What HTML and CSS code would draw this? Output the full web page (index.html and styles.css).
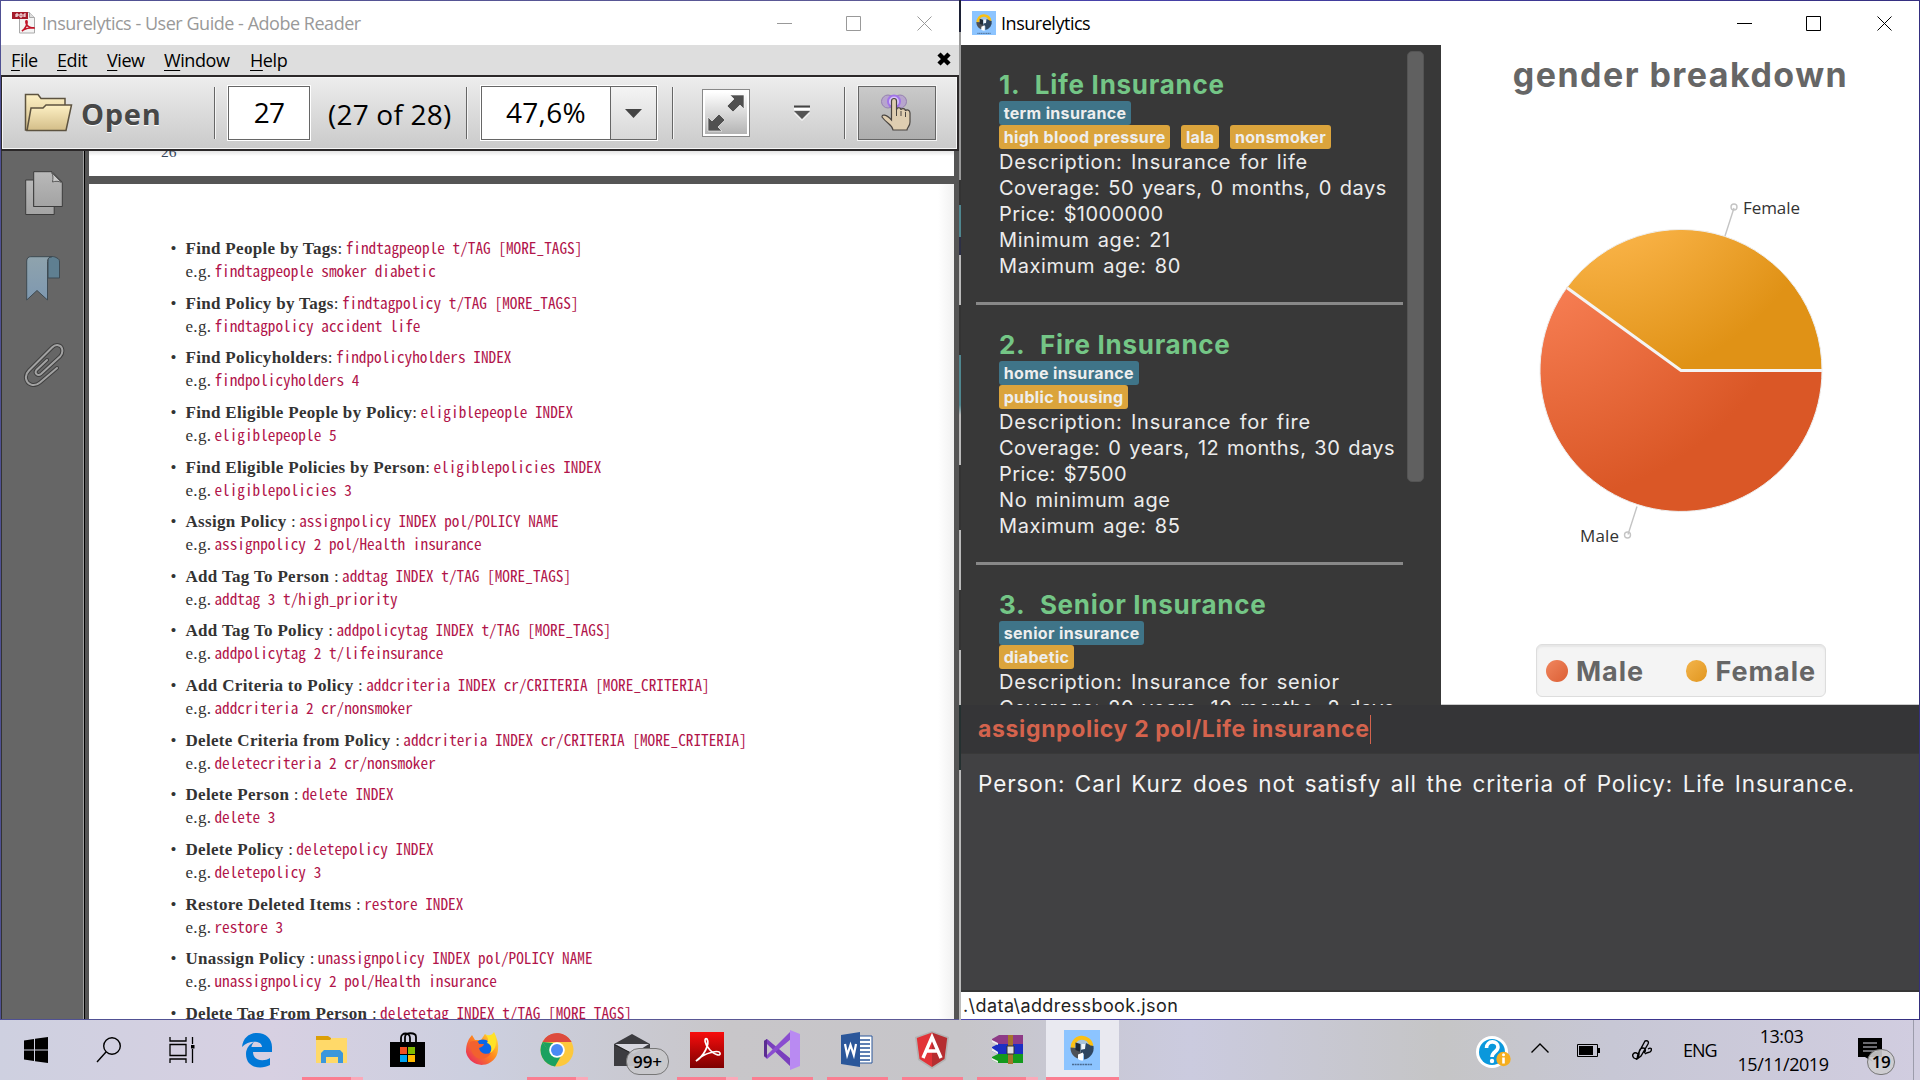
FILE: index.html
```html
<!DOCTYPE html>
<html lang="en">
<head>
<meta charset="utf-8">
<title>Insurelytics</title>
<link rel="stylesheet" href="styles.css">
</head>
<body>
<svg width="0" height="0" class="defs">
  <defs>
    <linearGradient id="folder" x1="0" y1="0" x2="0" y2="1"><stop offset="0" stop-color="#fdf0c4"/><stop offset="1" stop-color="#d3bd88"/></linearGradient>
    <linearGradient id="paper" x1="0" y1="0" x2="0" y2="1"><stop offset="0" stop-color="#b9b9b9"/><stop offset="1" stop-color="#a3a3a3"/></linearGradient>
    <linearGradient id="ribbon" x1="0" y1="0" x2="0" y2="1"><stop offset="0" stop-color="#8fa3ad"/><stop offset="1" stop-color="#7e98b0"/></linearGradient>
    <linearGradient id="full" x1="0" y1="0" x2="0" y2="1"><stop offset="0" stop-color="#fff"/><stop offset="1" stop-color="#b4b4b4"/></linearGradient>
    <linearGradient id="adobe" x1="0" y1="0" x2="0" y2="1"><stop offset="0" stop-color="#f80d0d"/><stop offset="1" stop-color="#7d0000"/></linearGradient>
    <linearGradient id="fox" x1="1" y1="0" x2="0" y2="1"><stop offset="0" stop-color="#fff044"/><stop offset=".45" stop-color="#ff8a1c"/><stop offset="1" stop-color="#e4186a"/></linearGradient>
    <symbol id="logo" viewBox="0 0 36 36">
      <rect width="36" height="36" fill="#8cc4ff"/>
      <circle cx="18" cy="17" r="8" fill="#a9c4dc"/>
      <path d="M8.800 17A9.300 9.300 0 0 1 27.300 15" fill="none" stroke="#fbc014" stroke-width="4"/>
      <path d="M29.500 15A11.700 11.700 0 0 1 20 28.500v-7L24 14z" fill="#2f4660"/>
      <path d="M6.500 16.500c0 5 2 8.500 7 11l5-4.500-6-6z" fill="#4d5157"/>
      <path d="M11.500 11.500l5 1.500v8l-5-2z" fill="#1f2a38"/>
      <path d="M22 12l4 2v6l-5 3-4-1v-3l4-1z" fill="#2f4660"/>
      <path d="M17.500 13h3.500v5h-3.500z" fill="#f1f6fb"/>
      <path d="M14 23.500l5-2v8c-2 0-3.500-.5-5-1.500z" fill="#fff"/>
      <path d="M8 33.500h20" stroke="#4a6b91" stroke-width="1.500" stroke-dasharray="2 .6"/>
    </symbol>
  </defs>
</svg>

<main class="desktop">
  <section class="window reader">
    <header class="titlebar">
      <svg class="app-icon" width="24" height="24" viewBox="0 0 24 24">
        <path d="M7.500 1.500h10l5 5v15.500h-15z" fill="#f4f4f4" stroke="#aaa"/>
        <path d="M17.500 1.500v5h5" fill="#ddd" stroke="#aaa"/>
        <path d="M0 1h16v7H0z" fill="#a51c2b"/>
        <path d="M4 6V3h2v2H4M8 3v3h2V3zM12 6V3h2M12 5h2" fill="none" stroke="#fff"/>
        <path d="M10 20c3-2 6-7 5-10-1-1-2 1 0 4s5 3 7 3-8-1-12 3z" fill="none" stroke="#c11327" stroke-width="1.600"/>
      </svg>
      <span class="title">Insurelytics - User Guide - Adobe Reader</span>
      <svg class="controls" width="156" height="15" viewBox="0 0 156 15"><path d="M0 7.500h15M69.500.5h14v14h-14zM140.500.5l14 14m0-14l-14 14" fill="none" stroke="currentColor"/></svg>
    </header>
    <nav class="menu">
      <span class="m-file"><u>F</u>ile</span><span class="m-edit"><u>E</u>dit</span><span class="m-view"><u>V</u>iew</span><span class="m-window"><u>W</u>indow</span><span><u>H</u>elp</span>
      <svg class="close-doc" width="14" height="14" viewBox="0 0 14 14"><path d="M2 2l10 10M12 2L2 12" stroke="#000" stroke-width="4.500"/></svg>
    </nav>
    <div class="toolbar">
      <div class="open">
        <svg width="49" height="40" viewBox="0 0 49 40">
          <path d="M1.500 37V1.500H14l3 4h24V37z" fill="url(#folder)" stroke="#5d5340" stroke-width="1.500"/>
          <path d="M3 37.500L7 15h12l3-3h25.500L42 37.500z" fill="url(#folder)" stroke="#5d5340" stroke-width="1.500"/>
        </svg>
        <b>Open</b>
      </div>
      <i class="sep"></i>
      <div class="page-box">27</div>
      <span class="page-count">(27 of 28)</span>
      <i class="sep"></i>
      <div class="zoom-box"><span>47,6%</span><div class="drop"><svg width="17" height="9"><path d="M0 0h17L8.500 9z" fill="#444"/></svg></div></div>
      <i class="sep"></i>
      <svg class="fullscreen" width="48" height="48" viewBox="0 0 48 48">
        <rect x=".5" y=".5" width="47" height="47" fill="#fff" stroke="#888"/>
        <rect x="3" y="3" width="42" height="42" fill="url(#full)"/>
        <path d="M28 6h14v14l-4-4-7 7-6-6 7-7zM6 28l4 4 7-7 6 6-7 7 4 4H6z" fill="#505050" stroke="#fff" stroke-width=".6"/>
      </svg>
      <svg class="more" width="18" height="18" viewBox="0 0 18 18"><path d="M1 2.500h16" stroke="#444" stroke-width="2"/><path d="M1 5h16" stroke="#fff" stroke-width="2"/><path d="M1 7h16l-8 8z" fill="#555"/><path d="M1.500 9L9 16.500 16.500 9" stroke="#fff" fill="none"/></svg>
      <i class="sep"></i>
      <div class="touch">
        <svg width="34" height="38" viewBox="0 0 34 38">
          <circle cx="8" cy="7.500" r="6.500" fill="#b7a5cd" stroke="#9681b1"/><circle cx="20" cy="7.500" r="6.500" fill="#b7a5cd" stroke="#9681b1"/>
          <circle cx="14" cy="7.500" r="7" fill="#a174e8"/><circle cx="14" cy="7.500" r="5" fill="#d8c2fb"/>
          <path d="M11.500 7a2.500 2.500 0 0 1 5 0v9c0-3 4.500-3 4.500 0 0-2 4.500-2 4.500 1 1-2 4.500-1 4.500 2v9c0 5-3 5-3 8H13c-1-6-6-6-11-13 0-3 4-3 9.500 3z" fill="#dfceb1" stroke="#4a4540" stroke-width="1.200"/>
          <path d="M16.500 16v6M21 17v5M25.500 18v5" stroke="#4a4540"/>
        </svg>
      </div>
    </div>
    <div class="reader-body">
      <aside class="side">
        <svg width="38" height="44" viewBox="0 0 38 44"><path d="M.7 9h8v26.500h20.500v8H.7z" fill="url(#paper)" stroke="#3c3c3c"/><path d="M8.700.7H27l10.300 10.500v24.300H8.700z" fill="url(#paper)" stroke="#3c3c3c"/><path d="M26.500 1.500c2 3 1.500 6 1 9.500 3-1 6-1 9 .5z" fill="#c9c9c9" stroke="#5a5a5a"/></svg>
        <svg width="35" height="45" viewBox="0 0 35 45"><path d="M22 2c2-2 6-2 9 0 2 1 2.500 2 2.500 4v16H22z" fill="#5f7f91" stroke="#3e4a52"/><path d="M.7 5c0-3 2-4.300 4-4.300H26c-3 0-4.500 2-4.500 5V44L11 34.500.7 44z" fill="url(#ribbon)" stroke="#3e4a52"/></svg>
        <svg width="42" height="45" viewBox="0 0 42 45"><g fill="none" stroke-linecap="round"><path d="M34 26L17 40.500c-6 5-13 2-14-4-.5-3 1-6 3-8L29 5.500c4-4 9-2.500 10 1s0 6-2 8L18 32c-3 2.500-7-.5-4.500-4L24 18" stroke="#3f3f3f" stroke-width="4"/><path d="M34 26L17 40.500c-6 5-13 2-14-4-.5-3 1-6 3-8L29 5.500c4-4 9-2.500 10 1s0 6-2 8L18 32c-3 2.500-7-.5-4.500-4L24 18" stroke="#a2a2a2" stroke-width="2"/></g></svg>
      </aside>
      <div class="pages">
        <div class="page previous"><span>26</span></div>
        <div class="page current">
          <ul class="commands">
            <li><b>Find People by Tags</b>: <code>findtagpeople t/TAG [MORE_TAGS]</code><br>e.g. <code>findtagpeople smoker diabetic</code></li>
            <li><b>Find Policy by Tags</b>: <code>findtagpolicy t/TAG [MORE_TAGS]</code><br>e.g. <code>findtagpolicy accident life</code></li>
            <li><b>Find Policyholders</b>: <code>findpolicyholders INDEX</code><br>e.g. <code>findpolicyholders 4</code></li>
            <li><b>Find Eligible People by Policy</b>: <code>eligiblepeople INDEX</code><br>e.g. <code>eligiblepeople 5</code></li>
            <li><b>Find Eligible Policies by Person</b>: <code>eligiblepolicies INDEX</code><br>e.g. <code>eligiblepolicies 3</code></li>
            <li><b>Assign Policy</b> : <code>assignpolicy INDEX pol/POLICY NAME</code><br>e.g. <code>assignpolicy 2 pol/Health insurance</code></li>
            <li><b>Add Tag To Person</b> : <code>addtag INDEX t/TAG [MORE_TAGS]</code><br>e.g. <code>addtag 3 t/high_priority</code></li>
            <li><b>Add Tag To Policy</b> : <code>addpolicytag INDEX t/TAG [MORE_TAGS]</code><br>e.g. <code>addpolicytag 2 t/lifeinsurance</code></li>
            <li><b>Add Criteria to Policy</b> : <code>addcriteria INDEX cr/CRITERIA [MORE_CRITERIA]</code><br>e.g. <code>addcriteria 2 cr/nonsmoker</code></li>
            <li><b>Delete Criteria from Policy</b> : <code>addcriteria INDEX cr/CRITERIA [MORE_CRITERIA]</code><br>e.g. <code>deletecriteria 2 cr/nonsmoker</code></li>
            <li><b>Delete Person</b> : <code>delete INDEX</code><br>e.g. <code>delete 3</code></li>
            <li><b>Delete Policy</b> : <code>deletepolicy INDEX</code><br>e.g. <code>deletepolicy 3</code></li>
            <li><b>Restore Deleted Items</b> : <code>restore INDEX</code><br>e.g. <code>restore 3</code></li>
            <li><b>Unassign Policy</b> : <code>unassignpolicy INDEX pol/POLICY NAME</code><br>e.g. <code>unassignpolicy 2 pol/Health insurance</code></li>
            <li><b>Delete Tag From Person</b> : <code>deletetag INDEX t/TAG [MORE_TAGS]</code></li>
          </ul>
        </div>
      </div>
    </div>
  </section>

  <section class="window insure">
    <header class="titlebar active">
      <svg class="app-icon" width="24" height="24"><use href="#logo"/></svg>
      <span class="title">Insurelytics</span>
      <svg class="controls" width="156" height="15" viewBox="0 0 156 15"><path d="M0 7.500h15M69.500.5h14v14h-14zM140.500.5l14 14m0-14l-14 14" fill="none" stroke="currentColor"/></svg>
    </header>
    <div class="content">
      <div class="list-panel">
        <div class="policies">
          <article class="policy">
            <h2><span>1.</span><span>Life Insurance</span></h2>
            <div class="tags"><span class="tag blue">term insurance</span></div>
            <div class="tags"><span class="tag">high blood pressure</span><span class="tag">lala</span><span class="tag">nonsmoker</span></div>
            <p class="description">Description: Insurance for life</p><p class="coverage">Coverage: 50 years, 0 months, 0 days</p><p class="price">Price: $1000000</p><p>Minimum age: 21</p><p>Maximum age: 80</p>
          </article>
          <article class="policy">
            <h2><span>2.</span><span>Fire Insurance</span></h2>
            <div class="tags"><span class="tag blue">home insurance</span></div>
            <div class="tags"><span class="tag">public housing</span></div>
            <p class="description">Description: Insurance for fire</p><p class="coverage">Coverage: 0 years, 12 months, 30 days</p><p class="price">Price: $7500</p><p>No minimum age</p><p>Maximum age: 85</p>
          </article>
          <article class="policy">
            <h2><span>3.</span><span>Senior Insurance</span></h2>
            <div class="tags"><span class="tag blue">senior insurance</span></div>
            <div class="tags"><span class="tag">diabetic</span></div>
            <p class="description">Description: Insurance for senior</p><p class="coverage">Coverage: 20 years, 10 months, 2 days</p>
          </article>
        </div>
        <div class="scrollbar"></div>
      </div>
      <div class="chart">
        <h1>gender breakdown</h1>
        <svg class="pie" width="478" height="360" viewBox="1441 195 478 360">
          <defs>
            <radialGradient id="gold" gradientUnits="userSpaceOnUse" cx="1590" cy="140" r="245"><stop offset=".45" stop-color="#f7b043"/><stop offset="1" stop-color="#e09216"/></radialGradient>
            <radialGradient id="orange" gradientUnits="userSpaceOnUse" cx="1520" cy="210" r="295"><stop offset=".3" stop-color="#f67d52"/><stop offset="1" stop-color="#da5726"/></radialGradient>
          </defs>
          <path d="M1681 370.500L1566.900 287.600A141 141 0 0 1 1822 370.500z" fill="url(#gold)" stroke="#eee" stroke-width="1"/>
          <path d="M1681 370.500H1822A141 141 0 1 1 1566.900 287.600z" fill="url(#orange)" stroke="#eee" stroke-width="1"/>
          <path d="M1567.300 288L1681 370.500H1822" fill="none" stroke="#f4f4f4" stroke-width="3"/>
          <g fill="none" stroke="#c4c4c4" stroke-width="1.400"><path d="M1725 236l9-28M1637 506.500l-9 28"/><circle cx="1734" cy="207" r="3"/><circle cx="1627.500" cy="535" r="3"/></g>
          <text x="1743" y="213.700" textLength="57">Female</text>
          <text x="1580" y="542" textLength="39">Male</text>
        </svg>
        <div class="legend"><i class="dot male"></i><b class="l-male">Male</b><i class="dot female"></i><b>Female</b></div>
      </div>
    </div>
    <div class="command"><span>assignpolicy 2 pol/Life insurance</span><i class="caret"></i></div>
    <div class="result">Person: Carl Kurz does not satisfy all the criteria of Policy: Life Insurance.</div>
    <footer class="status">.\data\addressbook.json</footer>
  </section>
</main>

<footer class="taskbar">
  <div class="cell sys"><svg width="24" height="26" viewBox="0 0 24 26"><path d="M0 3.500L10 2v10.500H0zM11 1.800L24 0v12.500H11zM0 13.500h10V24L0 22.500zM11 13.500h13V26l-13-1.800z"/></svg></div>
  <div class="cell sys"><svg width="26" height="26" viewBox="0 0 26 26"><g fill="none" stroke="#000" stroke-width="1.400"><circle cx="16" cy="9" r="8.300"/><path d="M10 15L1 25"/></g></svg></div>
  <div class="cell sys"><svg width="26" height="26" viewBox="0 0 26 26"><path d="M1 0v4h16V0M1 26v-4h16v4M1 7.500h16v11H1zM23.500 0v7M23.500 12v14" fill="none" stroke="#000" stroke-width="1.300"/><path d="M22 8h3.500v3.500H22z"/></svg></div>
  <div class="cell"><svg width="32" height="36" viewBox="0 0 32 36"><path d="M1 15C2 6 8 1 16 1c9 0 15 6 15 14v5H12c0 9 11 10 17 6v7c-9 5-24 3-24-11 0-6 4-10 8-12-2 2-2.500 4-2.500 5H21c0-7-14-7-20 0z" fill="#0078d7"/></svg></div>
  <div class="cell run more-win"><svg width="32" height="29" viewBox="0 0 32 29"><path d="M0 1h12l3 2v4H0z" fill="#dc9f06"/><path d="M0 5h14l2-2h15v25H0z" fill="#ffd969"/><path d="M5 28V18l3-3h16l3 3v10h-5v-6H10v6z" fill="#3b97dc"/></svg></div>
  <div class="cell"><svg width="35" height="36" viewBox="0 0 35 36"><path d="M11 10V6c0-6 9-6 9 0v4M15 10V5c0-5 11-5 11 0v5" fill="none" stroke="#000" stroke-width="1.800"/><path d="M0 10h35v25H0z"/><path d="M10 15h7v7h-7z" fill="#f25022"/><path d="M18 15h7v7h-7z" fill="#7fba00"/><path d="M10 23h7v7h-7z" fill="#00a4ef"/><path d="M18 23h7v7h-7z" fill="#ffb900"/></svg></div>
  <div class="cell"><svg width="34" height="36" viewBox="0 0 34 36"><path d="M4 7l3-4 3 5 6 0 4-6 4 4c4 0 6-2 5-6 3 6 5 12 4 18A16.200 16.200 0 0 1 1 20C1 14 2 11 4 7z" fill="url(#fox)"/><circle cx="18" cy="16" r="8.500" fill="#0a66e8"/><path d="M5 10c4-2 9-1 9 2l5 0c-1 3-3 3-5 4 1 5 6 7 12 5-4 7-14 8-18 1-2-4-4-8-3-12z" fill="#f2612f"/><path d="M19 2c4 2 5 6 3 9 4 1 6 6 3 10 6-3 8-11 4-21-3 5-7 3-10 2z" fill="#ffe226"/></svg></div>
  <div class="cell run more-win"><svg width="34" height="36" viewBox="0 0 34 36"><circle cx="17" cy="18" r="16.500" fill="#fdc83c"/><path d="M2.500 10a16.500 16.500 0 0 1 29 0z" fill="#dd4b3e"/><path d="M2.600 10A16.500 16.500 0 0 0 15 34.400L21 24 10 21z" fill="#1ba160"/><path d="M2.600 10L10 22l3-11z" fill="#1ba160"/><path d="M5 7c6-7 18-9 26.500 3H17z" fill="#dd4b3e"/><circle cx="17" cy="18" r="7.800" fill="#fff"/><circle cx="17" cy="18" r="6" fill="#4a8af4"/></svg></div>
  <div class="cell"><svg class="mail" width="36" height="32" viewBox="0 0 36 32"><path d="M0 10L18 0l18 10v22H0z" fill="#3c3c40"/><path d="M1 10h34L19 20z" fill="#d7d7df"/><path d="M1 11l18 9" stroke="#222"/></svg><span class="badge wide">99+</span></div>
  <div class="cell run more-win"><svg width="34" height="36" viewBox="0 0 34 36"><path d="M0 0h34v36H0z" fill="url(#adobe)"/><path d="M6 29c8-5 14-17 11-22-3-2-3 5 3 11s11 6 10 3-15-1-24 8z" fill="none" stroke="#fff" stroke-width="1.700"/></svg></div>
  <div class="cell run"><svg width="36" height="40" viewBox="0 0 36 40"><path d="M0 11l3-2 24 20v8L3 14v14l-3-2z" fill="#7a3fbd"/><path d="M0 26l3 3L27 9V1L3 25z" fill="#8a4dd0"/><path d="M26 0l10 4v32l-10 4z" fill="#b98af2"/><path d="M0 11l3-2v19l-3-2z" fill="#5b2d91"/></svg></div>
  <div class="cell run"><svg width="32" height="35" viewBox="0 0 32 35"><path d="M17 4h14v27H17z" fill="#fff" stroke="#2b579a"/><path d="M19 8h10M19 12h10M19 16h10M19 20h10M19 24h10M19 28h10" stroke="#2b579a" stroke-width="1.600"/><path d="M0 3l19-3v35L0 32z" fill="#2b579a"/><path d="M4 12l2.200 11L9.500 13l3.300 10L15 12" fill="none" stroke="#fff" stroke-width="2.200"/></svg></div>
  <div class="cell run"><svg width="34" height="38" viewBox="0 0 34 38"><path d="M17 0l17 6-3 23-14 9-14-9L0 6z" fill="#b3b3b3"/><path d="M17 1.500V36L4.500 28 1.800 7z" fill="#e23237"/><path d="M17 1.500V36l12.500-8 2.700-21z" fill="#b52e31"/><path d="M8 27l9-21 9 21M11.500 20h11" fill="none" stroke="#fff" stroke-width="3.400"/></svg></div>
  <div class="cell run more-win"><svg width="33" height="30" viewBox="0 0 33 30"><path d="M1 4l7-4h24v9H7L1 6z" fill="#8e3a86"/><path d="M1 12l6-3h25v10H7l-6-3z" fill="#1c2fc4"/><path d="M1 22l6-3h25v9H7l-6-3z" fill="#149a1d"/><path d="M1 5l6 3v2l-6-3zM1 13l6 4v2l-6-3zM1 23l6 3v2l-6-3z" fill="#eee"/><path d="M17 0h5v29h-5z" fill="#a5732c"/><path d="M16 11h7v8h-7z" fill="#ddd" stroke="#333"/></svg></div>
  <div class="cell run current-app"><svg width="36" height="40" viewBox="0 0 36 40"><rect width="36" height="40" fill="#8cc4ff"/><use href="#logo" width="36" height="36" y="1"/></svg></div>

  <div class="tray">
    <svg class="t-help" width="36" height="34" viewBox="0 0 36 34"><circle cx="16" cy="16" r="16" fill="#fff"/><circle cx="16" cy="16" r="13" fill="#0b98dc"/><path d="M10.500 12c0-8 11.500-8 11.500-1 0 5-6 4.500-6 10" fill="none" stroke="#fff" stroke-width="3.600"/><circle cx="16" cy="25" r="2.200" fill="#fff"/><circle cx="27.500" cy="23" r="7.200" fill="#f5ae1f"/><path d="M27.500 21.500v6" stroke="#fff" stroke-width="2.600"/><circle cx="27.500" cy="18.700" r="1.500" fill="#fff"/></svg>
    <svg class="t-up" width="18" height="10" viewBox="0 0 18 10"><path d="M.5 9.500L9 1l8.500 8.500" fill="none" stroke="#000" stroke-width="1.400"/></svg>
    <svg class="t-bat" width="23" height="13" viewBox="0 0 23 13"><path d="M.5.5h20v12H.5z" fill="none" stroke="#000"/><path d="M2 2h14v9H2zM21 4h2v5h-2z"/></svg>
    <svg class="t-pen" width="20" height="20" viewBox="0 0 20 20"><path d="M13 1c3-1 4 1 3 3L9 16l-4 3 1-5zM6 14c-4-3-7 1-4 4 3 2 5-1 5-4s1-6 4-6 3 3 1 5M16 9c3-2 4 0 3 2s-4 1-6 3" fill="none" stroke="#000" stroke-width="1.400"/></svg>
    <span class="lang">ENG</span>
    <div class="clock"><span>13:03</span><span>15/11/2019</span></div>
    <div class="notes"><svg width="24" height="24" viewBox="0 0 24 24"><path d="M0 0h24v19H11l4 5-8-5H0z"/><path d="M5 5h14M5 9h14M5 13h14" stroke="#d5d5e0"/></svg><span class="badge">19</span></div>
    <i class="peek"></i>
  </div>
</footer>
</body>
</html>
```
FILE: styles.css
```css
* { box-sizing: border-box; }
body {
  margin: 0;
  width: 1920px;
  height: 1080px;
  overflow: hidden;
  display: flex;
  flex-direction: column;
  font-family: "Open Sans", "Noto Sans", sans-serif;
  font-size: 18px;
  color: #000;
}
svg { flex: none; display: block; }
.defs { position: absolute; }

.desktop {
  height: 1020px;
  padding: 1px;
  display: flex;
  gap: 2px;
  background:
    linear-gradient(#1c2035 0 32px, #9a9a9a 32px 180px, #333 180px 205px, #4f8790 205px 237px, #2c2f45 237px 255px, #bbb 255px 305px, #333 305px 355px, #4f8790 355px 405px, #bbb 415px 465px, #333 465px 530px, #bbb 530px 590px, #333 590px 650px, #bbb 650px 705px, #243030 705px 770px, #bbb 770px) 959px 0 / 2px 100% no-repeat,
    linear-gradient(90deg, #4f5093 0, #5d5a96 50%, #4a45b0 50%, #352f80 100%);
}
.window { display: flex; flex-direction: column; width: 958px; height: 1018px; overflow: hidden; background: #fff; }

.titlebar { height: 44px; flex: none; display: flex; align-items: center; padding: 0 26px 0 11px; background: #fff; color: #999; }
.titlebar .title { flex: 1; margin: -1px 0 0 6px; letter-spacing: -.47px; }
.titlebar.active { color: #000; }
.titlebar.active .title { margin-left: 5px; }

.menu { height: 30px; flex: none; display: flex; align-items: center; padding: 0 8px 0 10px; background: #dedede; letter-spacing: -.42px; }
.menu u { text-underline-offset: 3px; text-decoration-thickness: 1px; }
.menu span { line-height: 28px; }
.m-file { width: 46px; }
.m-edit { width: 50px; }
.m-view { width: 57px; }
.m-window { width: 86px; }
.close-doc { margin-left: auto; margin-bottom: 2px; }

.toolbar {
  height: 76px;
  flex: none;
  display: flex;
  align-items: center;
  padding-left: 22px;
  border: 2px solid #2b2829;
  border-left-width: 1px;
  background: linear-gradient(#ededed, #cacaca);
  box-shadow: inset 0 0 0 1px #f6f6f6;
}
.open { width: 190px; display: flex; align-items: center; gap: 8px; color: #474747; font-size: 29px; letter-spacing: .7px; text-shadow: 0 1px #fff; }
.open b { padding-top: 1px; }
.sep { width: 1px; height: 52px; background: #666; box-shadow: 1px 0 #f5f5f5; }
.page-box { width: 82px; height: 54px; margin-left: 13px; border: 1px solid #666; outline: 1px solid #fff; background: #fff; text-align: center; font-size: 28px; line-height: 51px; letter-spacing: -.8px; }
.page-count { width: 138px; margin-left: 18px; font-size: 28px; padding-top: 1px; letter-spacing: .2px; }
.zoom-box { width: 176px; height: 54px; margin: 0 15px 0 14px; display: flex; border: 1px solid #666; outline: 1px solid #fff; background: #fff; font-size: 28px; line-height: 51px; letter-spacing: .3px; }
.zoom-box span { width: 128px; padding-left: 24px; }
.drop { flex: 1; display: flex; align-items: center; justify-content: center; border-left: 1px solid #666; background: linear-gradient(#f4f4f4, #d8d8d8); }
.fullscreen { margin-left: 29px; }
.more { margin: 0 33px 0 43px; }
.touch { width: 78px; height: 54px; margin-left: 13px; display: flex; align-items: center; justify-content: center; border: 1px solid #666; outline: 1px solid #f4f4f4; background: linear-gradient(#cacaca, #adadad); }

.reader-body { flex: 1; min-height: 0; display: flex; background: #555; }
.side { width: 84px; display: flex; flex-direction: column; align-items: center; gap: 41px; padding: 20px 0 0 1px; background: #666; border-left: 1px solid #333; border-right: 1px solid #000; box-shadow: inset -1px 0 #a0a0a0; }
.pages { width: 865px; margin-left: 4px; display: flex; flex-direction: column; gap: 8px; }
.page { background: #fff; overflow: hidden; color: #333; font-family: "Liberation Serif", serif; }
.previous { height: 25px; flex: none; padding-left: 72px; background: linear-gradient(#e4e4e4, #fff 5px); font-size: 15.500px; line-height: 18px; color: #33445a; }
.previous span { display: block; margin-top: -8px; }
.current { flex: 1; min-height: 0; background: linear-gradient(90deg, #fff 849px, #f1f1f1); }
.commands { list-style: none; margin: 0; padding: 53px 0 0 96.500px; }
.commands li { position: relative; height: 54.640px; font-size: 17px; line-height: 23px; letter-spacing: .32px; white-space: nowrap; }
.commands li::before { content: "•"; position: absolute; left: -15px; top: 0; }
.commands code { font: 15.270px/20px "Noto Sans Mono CJK JP", "Noto Sans CJK JP", monospace; letter-spacing: 0; font-variant-ligatures: none; color: #b1144a; margin-left: -1.500px; }

.content { height: 660px; flex: none; display: flex; }
.list-panel { width: 480px; padding-left: 15px; display: flex; gap: 4px; background: #383838; overflow: hidden; font-family: Inter, sans-serif; }
.policies { width: 427px; }
.policy { height: 260px; padding: 24px 0 0 23px; border-bottom: 3px solid #888; color: #ececec; white-space: nowrap; }
.policy h2 { margin: 0; height: 32px; display: flex; gap: 14.500px; font-size: 26px; line-height: 32px; letter-spacing: .72px; color: #74c686; }
.policy p { margin: 0; font-size: 20px; line-height: 26px; letter-spacing: .6px; word-spacing: 1.900px; }
.policy .description { letter-spacing: .8px; }
.policy .coverage { letter-spacing: .46px; }
.policy .price { letter-spacing: .4px; }
.tags { height: 24px; display: flex; gap: 11px; }
.tag { padding: 1px 4.700px 0; border-radius: 3px; background: #dba43c; font-size: 16px; font-weight: 700; line-height: 23px; letter-spacing: .34px; color: #eee; }
.blue { background: #3f7488; }
.scrollbar { width: 17px; height: 431px; margin-top: 6px; border-radius: 5px; border: 1px solid #545454; background: #606060; }

.chart { flex: 1; display: flex; flex-direction: column; align-items: center; border-bottom: 1px solid #ccc; font-family: Inter, sans-serif; color: #666; }
.chart h1 { margin: 6px 0 0 1px; height: 144px; font-size: 34px; line-height: 48px; letter-spacing: 1.450px; }
.pie text { font: 17px "Open Sans", sans-serif; fill: #333; }
.legend { width: 290px; height: 53px; margin: 89px 0 0 2px; display: flex; align-items: center; padding: 0 9px; border: 1px solid #ddd; border-radius: 6px; background: #f4f4f4; box-shadow: inset 0 2px 2px #e6e6e6; font-size: 27px; letter-spacing: .95px; }
.legend b { padding-top: 1px; }
.dot { width: 22px; height: 22px; margin-right: 8px; border-radius: 50%; }
.male { background: linear-gradient(135deg, #f0865e, #dc5f35); }
.female { background: linear-gradient(135deg, #f3b44b, #e1961f); }
.l-male { width: 110px; }

.command { height: 48px; flex: none; display: flex; align-items: center; padding: 0 0 0 17px; background: #353537; color: #d4634d; font: 700 23px Inter, sans-serif; letter-spacing: .65px; white-space: nowrap; }
.caret { width: 1px; height: 29px; background: #d4634d; }
.result { height: 239px; flex: none; padding: 14px 0 0 17px; background: #414143; border-top: 1px solid #393939; border-bottom: 2px solid #363636; color: #f4f4f4; font: 400 22.500px/32px Inter, sans-serif; letter-spacing: .9px; word-spacing: 2.300px; white-space: nowrap; }
.status { flex: 1; padding-left: 2px; background: #fff; color: #222; font: 18px/27px Inter, sans-serif; letter-spacing: .42px; }

.taskbar { height: 60px; flex: none; display: flex; background: linear-gradient(90deg, #ced0e0, #d7d0e2 14%, #cccfdf 25%, #c8c6c9 38%, #c6c5c9 50%, #cbcbdf 62%, #c5c5c6 75%, #c7c7d5 84%, #d1cde0); }
.cell { position: relative; width: 75px; display: flex; align-items: center; justify-content: center; padding: 0 0 1px 1px; }
.cell.sys { width: 73px; padding: 0 2px 0 0; }
.run::after { content: ""; position: absolute; left: 8px; bottom: 0; width: 61px; height: 3px; background: #fb7e91; }
.more-win::after { background: linear-gradient(90deg, #fb7e91 49px, #fba9b9 49px); }
.cell.current-app { width: 73px; background: #e9e9f0; margin-left: 2px; padding: 0 1px 1px 0; }
.current-app::after { left: 0; width: 73px; }
.badge { position: absolute; left: 9px; top: 11px; width: 28px; height: 26px; border: 1px solid #777; border-radius: 13px; background: rgba(205, 205, 207, .9); font-size: 17px; font-weight: 600; line-height: 23px; text-align: center; letter-spacing: -.5px; }
.badge.wide { left: 32px; top: 28px; width: 43px; height: 27px; z-index: 1; line-height: 25px; letter-spacing: 0; background: rgba(200, 200, 203, .94); }

.tray { flex: 1; display: flex; align-items: center; justify-content: flex-end; }
.t-help { margin: 6px 19px 0 0; }
.t-up { margin: 0 28px 4px 0; }
.t-bat { margin: 0 32px 0 0; }
.t-pen { margin: 0 31px 0 0; }
.lang { width: 33px; letter-spacing: -1px; margin-right: 21px; }
.clock { width: 92px; display: flex; flex-direction: column; align-items: center; line-height: 28px; letter-spacing: -.45px; padding-bottom: 1px; margin-right: 29px; }
.clock span:first-child { margin-left: -3px; }
.notes { position: relative; width: 37px; margin-right: 18px; padding-bottom: 1px; }
.peek { width: 1px; height: 60px; background: #9c9cab; margin-right: 6px; }
```
